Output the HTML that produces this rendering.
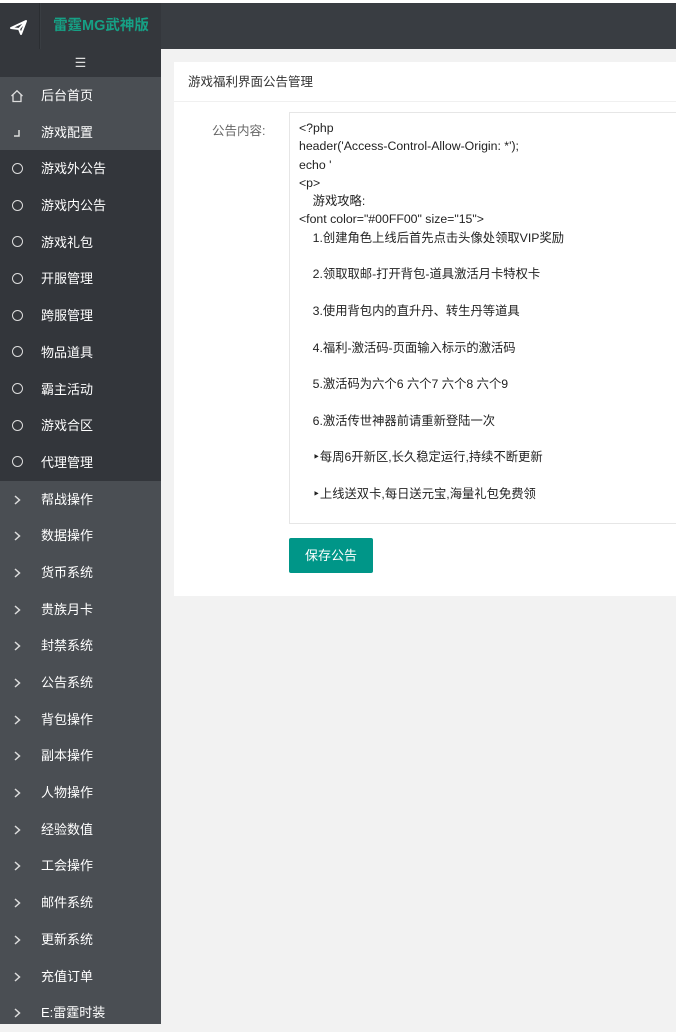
<!DOCTYPE html>
<html><head><meta charset="utf-8"><style>
*{margin:0;padding:0;box-sizing:border-box}
body{width:676px;height:1024px;overflow:hidden;background:#f2f2f2;font-family:"Liberation Sans","Noto Sans CJK SC",sans-serif;position:relative}
.topw{position:absolute;left:0;top:0;width:676px;height:3px;background:#fff}
.hdr{position:absolute;left:0;top:3px;width:676px;height:46px;background:#393d42}
.hicon{position:absolute;left:0;top:3px;width:40px;height:46px;background:#34373c;border-right:1px solid #2b2e32}
.logo{position:absolute;left:41px;top:3px;width:120px;height:46px;background:#34373c;color:#16a085;font-weight:bold;font-size:14.5px;line-height:46px;text-align:center}
.side{position:absolute;left:0;top:49px;width:161px;height:975px;background:#4a4e53}
.tog{height:28px;background:#34373c;color:#ddd;text-align:center;line-height:28px;font-size:13px}
.it{height:36.7px;line-height:38px;color:#fff;font-size:13px;padding-left:41px;position:relative}
.it .ic{position:absolute;left:10px;top:0;width:14px;height:36.7px;text-align:center;color:#ddd}
.it .ic svg{position:absolute;left:0;top:12px}
.dk{background:#33363b}
.circ{display:inline-block;width:11px;height:11px;border:1.5px solid #ddd;border-radius:50%;vertical-align:middle;margin-top:-3px}
.card{position:absolute;left:174px;top:62px;width:510px;height:534px;background:#fff}
.ch{height:40px;border-bottom:1px solid #f0f0f0;padding-left:14px;line-height:40px;font-size:12.5px;color:#333}
.lbl{position:absolute;left:38px;top:58px;font-size:12.5px;color:#666}
.ta{position:absolute;left:115px;top:50px;width:400px;height:412px;border:1px solid #e6e6e6;padding:6px 9px;font-size:12.3px;line-height:18.3px;color:#222;white-space:pre}
.btn{position:absolute;left:115px;top:476px;width:84px;height:35px;background:#009688;color:#fff;font-size:13px;line-height:35px;text-align:center;border-radius:2px}
</style></head><body>
<div class="topw"></div>
<div class="hdr"></div>
<div class="hicon"><svg width="40" height="46" viewBox="0 0 40 46"><path d="M11 25 L26 18 L21 31 L19 26 Z M19 26 L26 18" fill="none" stroke="#fff" stroke-width="2" stroke-linejoin="round"/></svg></div>
<div class="logo">雷霆MG武神版</div>
<div class="side">
<div class="tog">☰</div>
<div class="it"><span class="ic"><svg width="14" height="14" viewBox="0 0 14 14"><path d="M1.5 7 L7 1.8 L12.5 7 M3 6 V12.5 H11 V6" fill="none" stroke="#ddd" stroke-width="1.3"/></svg></span>后台首页</div>
<div class="it"><span class="ic"><svg width="14" height="14" viewBox="0 0 14 14"><path d="M9 4 V10 H4" fill="none" stroke="#ddd" stroke-width="1.5"/></svg></span>游戏配置</div>
<div class="dk">
<div class="it"><span class="ic"><i class="circ"></i></span>游戏外公告</div>
<div class="it"><span class="ic"><i class="circ"></i></span>游戏内公告</div>
<div class="it"><span class="ic"><i class="circ"></i></span>游戏礼包</div>
<div class="it"><span class="ic"><i class="circ"></i></span>开服管理</div>
<div class="it"><span class="ic"><i class="circ"></i></span>跨服管理</div>
<div class="it"><span class="ic"><i class="circ"></i></span>物品道具</div>
<div class="it"><span class="ic"><i class="circ"></i></span>霸主活动</div>
<div class="it"><span class="ic"><i class="circ"></i></span>游戏合区</div>
<div class="it"><span class="ic"><i class="circ"></i></span>代理管理</div>
</div>
<div class="it"><span class="ic"><svg width="14" height="14" viewBox="0 0 14 14"><path d="M5 3 L9.5 7 L5 11" fill="none" stroke="#ddd" stroke-width="1.5"/></svg></span>帮战操作</div>
<div class="it"><span class="ic"><svg width="14" height="14" viewBox="0 0 14 14"><path d="M5 3 L9.5 7 L5 11" fill="none" stroke="#ddd" stroke-width="1.5"/></svg></span>数据操作</div>
<div class="it"><span class="ic"><svg width="14" height="14" viewBox="0 0 14 14"><path d="M5 3 L9.5 7 L5 11" fill="none" stroke="#ddd" stroke-width="1.5"/></svg></span>货币系统</div>
<div class="it"><span class="ic"><svg width="14" height="14" viewBox="0 0 14 14"><path d="M5 3 L9.5 7 L5 11" fill="none" stroke="#ddd" stroke-width="1.5"/></svg></span>贵族月卡</div>
<div class="it"><span class="ic"><svg width="14" height="14" viewBox="0 0 14 14"><path d="M5 3 L9.5 7 L5 11" fill="none" stroke="#ddd" stroke-width="1.5"/></svg></span>封禁系统</div>
<div class="it"><span class="ic"><svg width="14" height="14" viewBox="0 0 14 14"><path d="M5 3 L9.5 7 L5 11" fill="none" stroke="#ddd" stroke-width="1.5"/></svg></span>公告系统</div>
<div class="it"><span class="ic"><svg width="14" height="14" viewBox="0 0 14 14"><path d="M5 3 L9.5 7 L5 11" fill="none" stroke="#ddd" stroke-width="1.5"/></svg></span>背包操作</div>
<div class="it"><span class="ic"><svg width="14" height="14" viewBox="0 0 14 14"><path d="M5 3 L9.5 7 L5 11" fill="none" stroke="#ddd" stroke-width="1.5"/></svg></span>副本操作</div>
<div class="it"><span class="ic"><svg width="14" height="14" viewBox="0 0 14 14"><path d="M5 3 L9.5 7 L5 11" fill="none" stroke="#ddd" stroke-width="1.5"/></svg></span>人物操作</div>
<div class="it"><span class="ic"><svg width="14" height="14" viewBox="0 0 14 14"><path d="M5 3 L9.5 7 L5 11" fill="none" stroke="#ddd" stroke-width="1.5"/></svg></span>经验数值</div>
<div class="it"><span class="ic"><svg width="14" height="14" viewBox="0 0 14 14"><path d="M5 3 L9.5 7 L5 11" fill="none" stroke="#ddd" stroke-width="1.5"/></svg></span>工会操作</div>
<div class="it"><span class="ic"><svg width="14" height="14" viewBox="0 0 14 14"><path d="M5 3 L9.5 7 L5 11" fill="none" stroke="#ddd" stroke-width="1.5"/></svg></span>邮件系统</div>
<div class="it"><span class="ic"><svg width="14" height="14" viewBox="0 0 14 14"><path d="M5 3 L9.5 7 L5 11" fill="none" stroke="#ddd" stroke-width="1.5"/></svg></span>更新系统</div>
<div class="it"><span class="ic"><svg width="14" height="14" viewBox="0 0 14 14"><path d="M5 3 L9.5 7 L5 11" fill="none" stroke="#ddd" stroke-width="1.5"/></svg></span>充值订单</div>
<div class="it"><span class="ic"><svg width="14" height="14" viewBox="0 0 14 14"><path d="M5 3 L9.5 7 L5 11" fill="none" stroke="#ddd" stroke-width="1.5"/></svg></span>E:雷霆时装</div>
</div>
<div class="card">
<div class="ch">游戏福利界面公告管理</div>
<div class="lbl">公告内容:</div>
<div class="ta">&lt;?php
header('Access-Control-Allow-Origin: *');
echo '
&lt;p&gt;
    游戏攻略:
&lt;font color="#00FF00" size="15"&gt;
    1.创建角色上线后首先点击头像处领取VIP奖励

    2.领取取邮-打开背包-道具激活月卡特权卡

    3.使用背包内的直升丹、转生丹等道具

    4.福利-激活码-页面输入标示的激活码

    5.激活码为六个6 六个7 六个8 六个9

    6.激活传世神器前请重新登陆一次

    ‣每周6开新区,长久稳定运行,持续不断更新

    ‣上线送双卡,每日送元宝,海量礼包免费领</div>
<div class="btn">保存公告</div>
</div>
</body></html>
